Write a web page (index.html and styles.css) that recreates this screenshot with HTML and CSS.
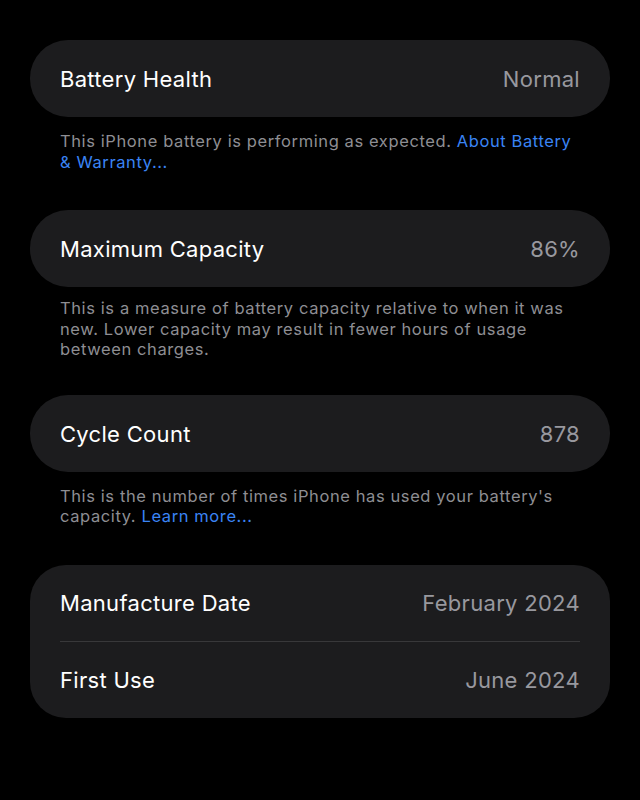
FILE: index.html
```html
<!DOCTYPE html>
<html lang="en">
<head>
<meta charset="utf-8">
<link rel="stylesheet" href="styles.css">
</head>
<body>
<main class="page">
  <section class="group">
    <div class="card">
      <div class="row"><span class="label">Battery Health</span><span class="value">Normal</span></div>
    </div>
    <p class="note">This iPhone battery is performing as expected. <span class="link">About Battery &amp; Warranty...</span></p>
  </section>
  <section class="group group-tight">
    <div class="card">
      <div class="row"><span class="label">Maximum Capacity</span><span class="value">86%</span></div>
    </div>
    <p class="note">This is a measure of battery capacity relative to when it was new. Lower capacity may result in fewer hours of usage between charges.</p>
  </section>
  <section class="group">
    <div class="card">
      <div class="row"><span class="label">Cycle Count</span><span class="value">878</span></div>
    </div>
    <p class="note">This is the number of times iPhone has used your battery's capacity. <span class="link">Learn more...</span></p>
  </section>
  <section class="group">
    <div class="card card-list">
      <div class="row"><span class="label">Manufacture Date</span><span class="value">February 2024</span></div>
      <div class="sep"></div>
      <div class="row"><span class="label">First Use</span><span class="value">June 2024</span></div>
    </div>
  </section>
</main>
</body>
</html>
```
FILE: styles.css
```css
html, body {
  margin: 0;
  padding: 0;
  background: #000;
}
body {
  width: 640px;
  height: 800px;
  overflow: hidden;
  font-family: Inter, "Noto Sans", sans-serif;
}
.page {
  padding: 40px 30px 0 30px;
  display: flex;
  flex-direction: column;
}
.group {
  margin-bottom: 38px;
}
.group-tight {
  margin-bottom: 35px;
}
.group-tight .note {
  margin-top: 11px;
}
.card {
  background: #1c1c1e;
  border-radius: 38px;
  padding: 0 30px;
}
.card-list {
  border-radius: 36px;
}
.row {
  height: 77px;
  display: flex;
  align-items: center;
  justify-content: space-between;
  font-size: 22px;
  letter-spacing: 0.3px;
  padding-top: 1px;
  box-sizing: border-box;
}
.card-list .row {
  height: 76px;
}
.label {
  color: #fff;
}
.value {
  color: #98989e;
}
.sep {
  height: 1px;
  background: #38383a;
}
.note {
  margin: 14px 0 0 0;
  padding: 0 30px;
  font-size: 16.5px;
  line-height: 20.5px;
  letter-spacing: 0.6px;
  color: #8e8e93;
}
.link {
  color: #3a84f5;
}
```
